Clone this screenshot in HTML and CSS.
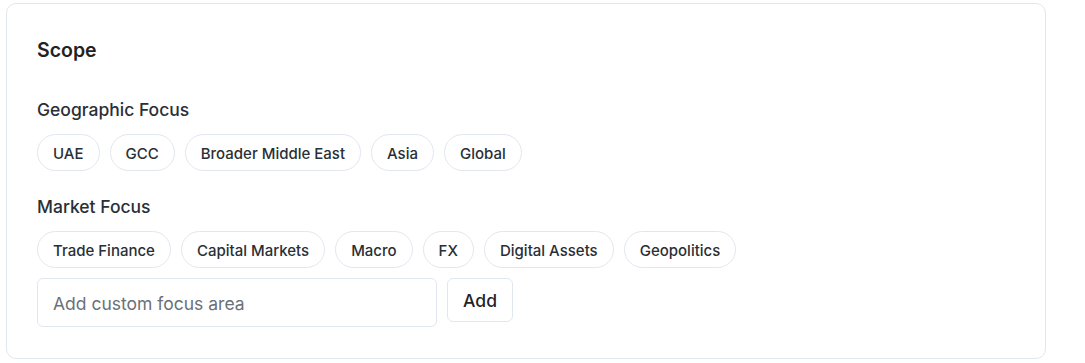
FILE: index.html
```html
<!DOCTYPE html>
<html>
<head>
<meta charset="utf-8">
<link rel="stylesheet" href="styles.css">
</head>
<body>
<section class="card">
  <h2 class="title">Scope</h2>
  <div class="group">
    <h3 class="label">Geographic Focus</h3>
    <div class="chips">
      <span class="chip">UAE</span>
      <span class="chip">GCC</span>
      <span class="chip">Broader Middle East</span>
      <span class="chip">Asia</span>
      <span class="chip">Global</span>
    </div>
  </div>
  <div class="group market">
    <h3 class="label">Market Focus</h3>
    <div class="stack">
      <div class="chips">
        <span class="chip">Trade Finance</span>
        <span class="chip">Capital Markets</span>
        <span class="chip">Macro</span>
        <span class="chip">FX</span>
        <span class="chip">Digital Assets</span>
        <span class="chip">Geopolitics</span>
      </div>
      <div class="add-row">
        <input class="input" type="text" placeholder="Add custom focus area">
        <button class="btn">Add</button>
      </div>
    </div>
  </div>
</section>
</body>
</html>
```

FILE: styles.css
```css
html, body {
  margin: 0;
  padding: 0;
  background: #ffffff;
}
body {
  padding: 3px 39px 0 6px;
  font-family: Inter, "Noto Sans", sans-serif;
  color: #1f2328;
}
.card {
  box-sizing: border-box;
  width: 1040px;
  height: 356px;
  border: 1px solid #e2e6ee;
  border-radius: 10px;
  padding: 32px 30px 30px;
  background: #fff;
}
.title {
  margin: 0;
  font-size: 19.5px;
  line-height: 28px;
  font-weight: 600;
  color: #1f2328;
}
.group {
  margin-top: 34px;
  display: flex;
  flex-direction: column;
  gap: 12px;
}
.group.market {
  margin-top: 24px;
}
.stack {
  display: flex;
  flex-direction: column;
  gap: 10px;
}
.label {
  margin: 0;
  font-size: 17.5px;
  line-height: 24px;
  font-weight: 500;
  color: #2a2f36;
}
.chips {
  display: flex;
  flex-wrap: wrap;
  gap: 10px;
}
.chip {
  box-sizing: border-box;
  height: 37px;
  display: inline-flex;
  align-items: center;
  padding: 1px 15px 0;
  border: 1px solid #e2e7ef;
  border-radius: 999px;
  font-size: 15px;
  font-weight: 500;
  color: #2a2f36;
  background: #fff;
}
.add-row {
  display: flex;
  gap: 10px;
  align-items: flex-start;
}
.input {
  box-sizing: border-box;
  width: 400px;
  height: 49px;
  border: 1px solid #e2e7ef;
  border-radius: 6px;
  padding: 1px 15px 0;
  font-family: Inter, "Noto Sans", sans-serif;
  font-size: 17.5px;
  color: #1f2328;
  outline: none;
}
.input::placeholder {
  color: #6b7079;
}
.btn {
  box-sizing: border-box;
  width: 66px;
  height: 44px;
  border: 1px solid #e2e7ef;
  border-radius: 6px;
  background: #fff;
  font-family: Inter, "Noto Sans", sans-serif;
  font-size: 17.5px;
  font-weight: 500;
  color: #1f2328;
  padding: 0;
}
```
